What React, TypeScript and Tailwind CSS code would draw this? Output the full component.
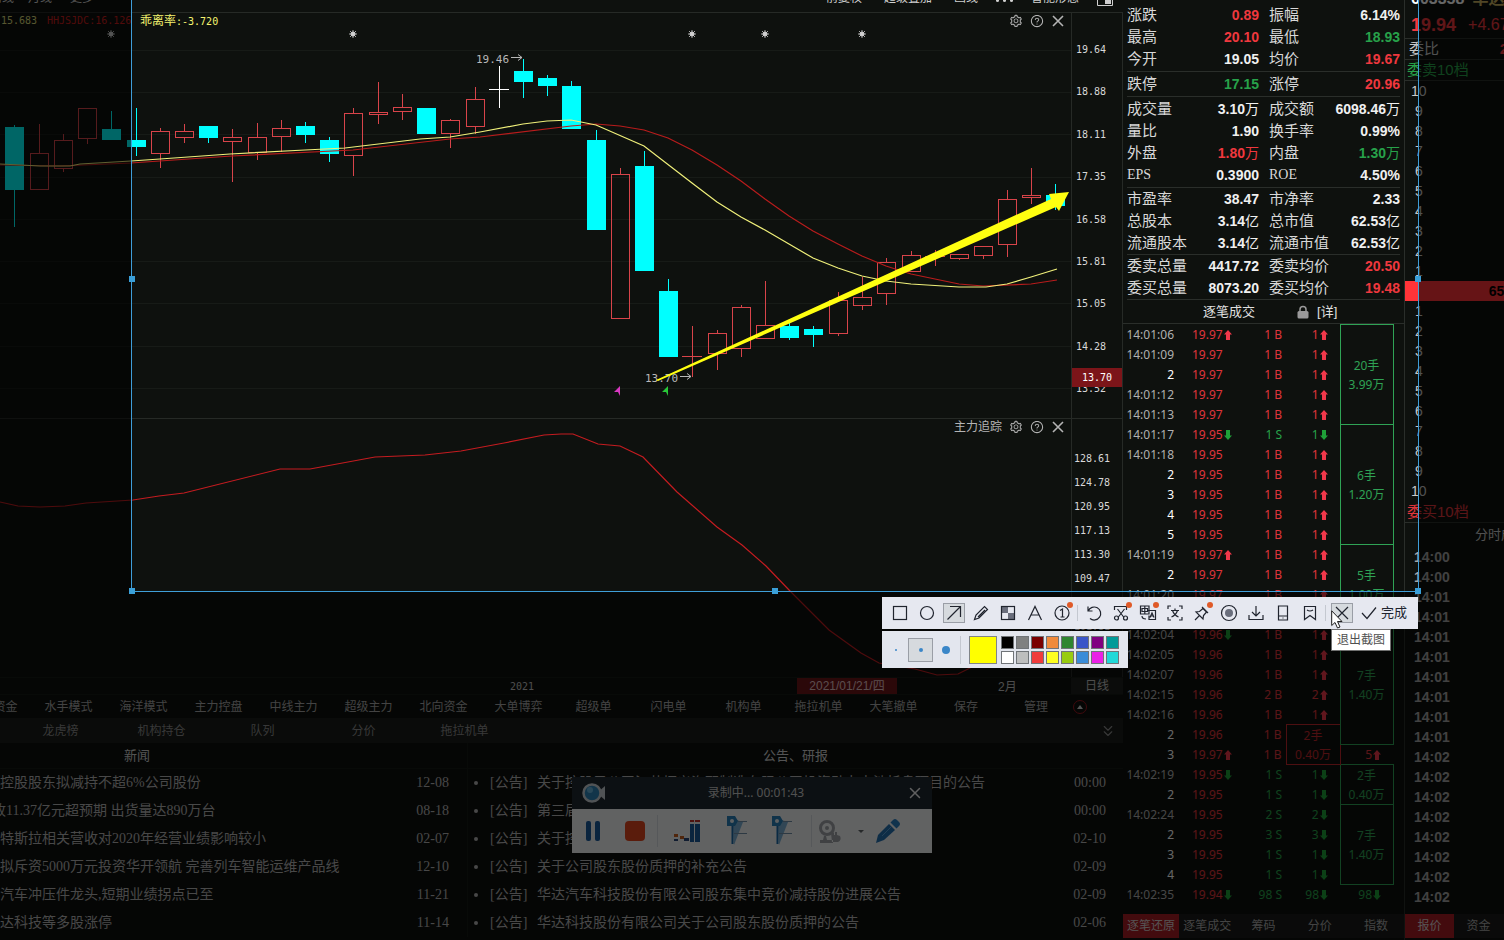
import type { ReactNode } from 'react'
import { AiOutlineQuestionCircle, AiOutlineSetting } from 'react-icons/ai'
import { ChevronsDown, X } from 'lucide-react'

type Candle = { x: number; kind: 'up' | 'down' | 'flat'; top: number; bottom: number; high: number; low: number }

const c = (x: number, kind: Candle['kind'], top: number, bottom: number, high = top, low = bottom): Candle => ({
  x, kind, top, bottom, high, low,
})

const CANDLES: Candle[] = [
  c(14, 'down', 127, 190, 125, 227),
  c(39, 'up', 153, 190, 124),
  c(63, 'up', 140, 169, 134, 172),
  c(87, 'up', 108, 139, 108, 144),
  c(111, 'down', 129, 140, 111),
  c(136, 'down', 140, 147, 108, 156),
  c(160, 'up', 131, 154, 128, 168),
  c(184, 'up', 131, 138, 124, 143),
  c(208, 'down', 126, 138, 126, 143),
  c(232, 'up', 137, 142, 129, 182),
  c(257, 'up', 137, 153, 123, 160),
  c(281, 'up', 128, 137, 120, 152),
  c(305, 'down', 126, 135, 122, 143),
  c(329, 'down', 140, 154, 137, 162),
  c(353, 'up', 113, 156, 108, 176),
  c(378, 'up', 112, 115, 82, 124),
  c(402, 'up', 107, 112, 94, 120),
  c(426, 'down', 108, 134),
  c(450, 'up', 120, 134, 119, 148),
  c(475, 'up', 99, 127, 87, 134),
  c(499, 'flat', 89, 89, 66, 108),
  c(523, 'down', 71, 82, 59, 98),
  c(547, 'down', 78, 86, 75, 96),
  c(571, 'down', 86, 129, 81),
  c(596, 'down', 140, 230, 130),
  c(620, 'up', 174, 319, 168),
  c(644, 'down', 166, 271, 151),
  c(668, 'down', 291, 357, 279),
  c(692, 'up', 356, 356, 326, 377),
  c(717, 'up', 333, 354, 330, 370),
  c(741, 'up', 307, 349, 305, 357),
  c(765, 'up', 325, 339, 281),
  c(789, 'down', 326, 338, 320, 340),
  c(813, 'down', 329, 335, 326, 347),
  c(838, 'up', 300, 334, 292, 336),
  c(862, 'up', 297, 306, 277, 310),
  c(886, 'up', 262, 294, 258, 305),
  c(911, 'up', 255, 272, 251),
  c(935, 'up', 256, 256, 250, 266),
  c(959, 'up', 254, 259, 254, 260),
  c(983, 'up', 246, 256, 246, 259),
  c(1007, 'up', 199, 245, 190, 257),
  c(1031, 'up', 195, 198, 168, 204),
  c(1055, 'down', 195, 206, 184, 210),
]

const MA_FAST =
  '0,164 40,166 70,166 80,164 131,161 160,159 230,154 305,150 345,148 420,139 450,137 480,132 523,124 547,121 571,120 596,125 644,146 692,183 717,202 741,217 765,230 789,244 813,258 838,268 862,276 886,281 911,284 959,287 986,287 1007,284 1031,277 1057,269'
const MA_SLOW =
  '0,165 60,166 131,163 232,156 353,150 450,139 480,137 571,126 596,124 620,126 644,130 668,138 692,150 717,165 741,181 765,199 789,216 813,231 838,244 862,256 886,266 911,274 935,279 959,284 983,286 1031,284 1057,280'
const TRACE =
  '0,502 18,506 40,507 65,506 86,503 133,500 159,496 184,493 280,469 310,469 375,457 425,455 461,451 504,443 544,435 561,434 573,434 598,444 620,446 643,457 677,492 717,527 742,545 766,566 790,591 829,630 861,653 879,663 915,669 937,675 958,674 980,663'

const PRICE_AXIS = ['19.64', '18.88', '18.11', '17.35', '16.58', '15.81', '15.05', '14.28', '13.52']
const TRACE_AXIS = ['128.61', '124.78', '120.95', '117.13', '113.30', '109.47', '105.64', '101.81']
const GRID_Y = [50, 92, 134, 177, 219, 261, 303, 346, 388]

const SCHEMES = [
  '游击资金', '水手模式', '海洋模式', '主力控盘', '中线主力', '超级主力', '北向资金',
  '大单博弈', '超级单', '闪电单', '机构单', '拖拉机单', '大笔撤单',
]
const SUB_TABS = ['龙虎榜', '机构持仓', '队列', '分价', '拖拉机单']

const NEWS = [
  { title: '控股股东拟减持不超6%公司股份', date: '12-08' },
  { title: '收11.37亿元超预期 出货量达890万台', date: '08-18', clipped: true },
  { title: '特斯拉相关营收对2020年经营业绩影响较小', date: '02-07' },
  { title: '拟斥资5000万元投资华开领航 完善列车智能运维产品线', date: '12-10' },
  { title: '汽车冲压件龙头,短期业绩拐点已至', date: '11-21' },
  { title: '达科技等多股涨停', date: '11-14' },
]

const NOTICES = [
  { title: '关于控股子公司江苏恒义汽配制造有限公司投资动力电池托盘项目的公告', date: '00:00' },
  { title: '第三届董事会第十次会议决议公告', date: '00:00' },
  { title: '关于控股股东股份质押的公告', date: '02-10' },
  { title: '关于公司股东股份质押的补充公告', date: '02-09' },
  { title: '华达汽车科技股份有限公司股东集中竞价减持股份进展公告', date: '02-09' },
  { title: '华达科技股份有限公司关于公司股东股份质押的公告', date: '02-06' },
]

const RED = 'text-[#f0383e]'
const GREEN = 'text-[#27a24a]'
const WHITE = 'text-[#f0f0f0]'

type Stat = [label: string, value: string, color: string]

const STATS: { pad: string; rows: [Stat, Stat][] }[] = [
  {
    pad: 'pt-1 pb-px',
    rows: [
      [['涨跌', '0.89', RED], ['振幅', '6.14%', WHITE]],
      [['最高', '20.10', RED], ['最低', '18.93', GREEN]],
      [['今开', '19.05', WHITE], ['均价', '19.67', RED]],
    ],
  },
  { pad: 'py-px', rows: [[['跌停', '17.15', GREEN], ['涨停', '20.96', RED]]] },
  {
    pad: 'py-px',
    rows: [
      [['成交量', '3.10万', WHITE], ['成交额', '6098.46万', WHITE]],
      [['量比', '1.90', WHITE], ['换手率', '0.99%', WHITE]],
      [['外盘', '1.80万', RED], ['内盘', '1.30万', GREEN]],
      [['EPS', '0.3900', WHITE], ['ROE', '4.50%', WHITE]],
    ],
  },
  {
    pad: '',
    rows: [
      [['市盈率', '38.47', WHITE], ['市净率', '2.33', WHITE]],
      [['总股本', '3.14亿', WHITE], ['总市值', '62.53亿', WHITE]],
      [['流通股本', '3.14亿', WHITE], ['流通市值', '62.53亿', WHITE]],
    ],
  },
  {
    pad: '',
    rows: [
      [['委卖总量', '4417.72', WHITE], ['委卖均价', '20.50', RED]],
      [['委买总量', '8073.20', WHITE], ['委买均价', '19.48', RED]],
    ],
  },
]

type Dir = 'up' | 'down'
type Group = { span: number; hands: string; amount: string }
type Tick = {
  time: string
  price: string
  mark?: Dir
  lots: number
  side: 'B' | 'S'
  box?: Group // merged order in the last column
  redBox?: Group // merged order in the count column
  noCount?: boolean
  last?: { value: string; dir: Dir }
}

const TICKS: Tick[] = [
  { time: '14:01:06', price: '19.97', mark: 'up', lots: 1, side: 'B', box: { span: 5, hands: '20手', amount: '3.99万' } },
  { time: '14:01:09', price: '19.97', lots: 1, side: 'B' },
  { time: '2', price: '19.97', lots: 1, side: 'B' },
  { time: '14:01:12', price: '19.97', lots: 1, side: 'B' },
  { time: '14:01:13', price: '19.97', lots: 1, side: 'B' },
  { time: '14:01:17', price: '19.95', mark: 'down', lots: 1, side: 'S', box: { span: 6, hands: '6手', amount: '1.20万' } },
  { time: '14:01:18', price: '19.95', lots: 1, side: 'B' },
  { time: '2', price: '19.95', lots: 1, side: 'B' },
  { time: '3', price: '19.95', lots: 1, side: 'B' },
  { time: '4', price: '19.95', lots: 1, side: 'B' },
  { time: '5', price: '19.95', lots: 1, side: 'B' },
  { time: '14:01:19', price: '19.97', mark: 'up', lots: 1, side: 'B', box: { span: 4, hands: '5手', amount: '1.00万' } },
  { time: '2', price: '19.97', lots: 1, side: 'B' },
  { time: '14:01:20', price: '19.97', lots: 1, side: 'B' },
  { time: '14:01:22', price: '19.97', lots: 1, side: 'B' },
  { time: '14:02:04', price: '19.96', mark: 'down', lots: 1, side: 'B', box: { span: 6, hands: '7手', amount: '1.40万' } },
  { time: '14:02:05', price: '19.96', lots: 1, side: 'B' },
  { time: '14:02:07', price: '19.96', lots: 1, side: 'B' },
  { time: '14:02:15', price: '19.96', lots: 2, side: 'B' },
  { time: '14:02:16', price: '19.96', lots: 1, side: 'B' },
  { time: '2', price: '19.96', lots: 1, side: 'B', redBox: { span: 2, hands: '2手', amount: '0.40万' } },
  { time: '3', price: '19.97', mark: 'up', lots: 1, side: 'B', noCount: true, last: { value: '5', dir: 'up' } },
  { time: '14:02:19', price: '19.95', mark: 'down', lots: 1, side: 'S', box: { span: 2, hands: '2手', amount: '0.40万' } },
  { time: '2', price: '19.95', lots: 1, side: 'S' },
  { time: '14:02:24', price: '19.95', lots: 2, side: 'S', box: { span: 4, hands: '7手', amount: '1.40万' } },
  { time: '2', price: '19.95', lots: 3, side: 'S' },
  { time: '3', price: '19.95', lots: 1, side: 'S' },
  { time: '4', price: '19.95', lots: 1, side: 'S' },
  { time: '14:02:35', price: '19.94', mark: 'down', lots: 98, side: 'S', last: { value: '98', dir: 'down' } },
]

const ASKS = ['10', '9', '8', '7', '6', '5', '4', '3', '2', '1']
const BIDS = [...ASKS].reverse()
const MINUTES = [...Array(2).fill('14:00'), ...Array(8).fill('14:01'), ...Array(8).fill('14:02')] as string[]

function DirArrow({ dir }: { dir: Dir }) {
  return (
    <svg viewBox="0 0 8 10" className={`ml-px inline-block h-2.5 w-2 align-[-1px] ${dir === 'up' ? 'text-[#f0384a]' : 'text-[#1fa038] rotate-180'}`}>
      <path d="M4 0L8 4.5H6V10H2V4.5H0Z" fill="currentColor" />
    </svg>
  )
}

function PaneTools({ title }: { title?: string }) {
  return (
    <div className="flex items-center gap-[7px] text-[#b4b4b4]">
      {title && <span className="text-xs">{title}</span>}
      <button aria-label="设置"><AiOutlineSetting size={14} /></button>
      <button aria-label="帮助"><AiOutlineQuestionCircle size={14} /></button>
      <button aria-label="关闭">
        <svg viewBox="0 0 14 14" className="h-3.5 w-3.5" stroke="currentColor" strokeWidth="1.6">
          <path d="M2 2L12 12M12 2L2 12" />
        </svg>
      </button>
    </div>
  )
}

function CandleShape({ candle }: { candle: Candle }) {
  const { x, kind, top, bottom, high, low } = candle
  const color = kind === 'up' ? '#d8444a' : kind === 'down' ? '#00ffff' : '#ffffff'
  const mid = x + 0.5
  if (top === bottom) {
    return (
      <g stroke={color}>
        <line x1={x - 10} x2={x + 10} y1={top + 0.5} y2={top + 0.5} />
        <line x1={mid} x2={mid} y1={high} y2={low} />
      </g>
    )
  }
  return (
    <g stroke={color}>
      {high < top && <line x1={mid} x2={mid} y1={high} y2={top} />}
      {low > bottom && <line x1={mid} x2={mid} y1={bottom} y2={low} />}
      <rect x={x - 9 + 0.5} y={top + 0.5} width={18} height={bottom - top - 1} fill={kind === 'down' ? color : 'none'} />
    </g>
  )
}

function Star({ x }: { x: number }) {
  return (
    <g stroke="#d0d0d0" fill="#d0d0d0">
      <circle cx={x} cy={34} r={2} />
      <path d={`M${x - 4} 34h8M${x} 30v8M${x - 3} 31l6 6M${x + 3} 31l-6 6`} strokeWidth="0.8" />
    </g>
  )
}

function PriceChart() {
  return (
    <svg className="block h-full w-full">
      {/* the pane starts 13px below the window edge */}
      <g transform="translate(0 -13)">
        {GRID_Y.map(y => <line key={y} x1={0} x2="100%" y1={y + 0.5} y2={y + 0.5} stroke="#171b17" />)}
        {[111, 353, 692, 765, 862].map(x => <Star key={x} x={x} />)}
        {CANDLES.map(k => <CandleShape key={k.x} candle={k} />)}
        <polyline points={MA_SLOW} fill="none" stroke="#b81c1c" strokeWidth="1.2" />
        <polyline points={MA_FAST} fill="none" stroke="#f0f07a" strokeWidth="1.2" />
        <g className="font-['DejaVu_Sans_Mono',monospace] text-[11px]" fill="#b8b8b8">
          <text x="476" y="63">19.46</text>
          <text x="645" y="382">13.70</text>
        </g>
        <path d="M511 57.5h11M518 54.5l4 3l-4 3M680 376.5h11M687 373.5l4 3l-4 3" fill="none" stroke="#b8b8b8" />
        <path d="M614 392L620 386V396L618 392Z" fill="#d838c0" />
        <path d="M662 392L668 386V396L666 392Z" fill="#28c838" />
        <path d="M656 380L1051 199L1049 194L1069 192L1059 211L1056 207L658 381Z" fill="#ffff10" />
      </g>
    </svg>
  )
}

function ChartArea() {
  return (
    <div className="flex border-t border-[#262a26]">
      <div className="min-w-0 flex-1">
        <section className="relative h-[405px]">
          <PriceChart />
          <header className="absolute inset-x-0 top-0 flex h-4 items-center justify-between pr-1.5 pl-px">
            <div className="flex items-center text-xs whitespace-nowrap">
              <span className="w-[46px] font-['DejaVu_Sans_Mono',monospace] text-[10px] text-[#d8d878]">15.683</span>
              <span className="w-[93px] font-['DejaVu_Sans_Mono',monospace] text-[10px] text-[#c81c1c]">HHJSJDC:16.126</span>
              <span className="text-[#f4f470]">
                乖离率<span className="font-['DejaVu_Sans_Mono',monospace] text-[10px]">:-3.720</span>
              </span>
            </div>
            <PaneTools />
          </header>
        </section>
        <section className="relative h-[259px] border-t border-[#262a26]">
          <svg className="block h-full w-full">
            <g transform="translate(0 -419)">
              <polyline points={TRACE} fill="none" stroke="#c41c20" strokeWidth="1.2" />
            </g>
          </svg>
          <header className="absolute inset-x-0 top-0 flex h-4 items-center justify-end pr-1.5">
            <PaneTools title="主力追踪" />
          </header>
        </section>
      </div>

      <div className="w-[52px] border-x border-[#262a26] font-['DejaVu_Sans_Mono',monospace] text-[10px] text-[#d8d8d8]">
        <div className="relative flex h-[405px] flex-col justify-between pt-[30px] pb-[22px] pl-1">
          {PRICE_AXIS.map(p => <span key={p} className="leading-[14px]">{p}</span>)}
          <span className="absolute inset-x-0 bottom-[31px] bg-[#7c1519] pl-2.5 leading-[19px] text-white">13.70</span>
        </div>
        <div className="flex h-[259px] flex-col border-t border-[#262a26] pt-7 pl-0.5">
          {TRACE_AXIS.map(p => <span key={p} className="leading-6">{p}</span>)}
        </div>
      </div>
    </div>
  )
}

function NewsPanels() {
  return (
    <div className="flex text-sm text-[#b4b4b4]">
      <section className="w-[468px] shrink-0 border-r border-[#161916]">
        <h2 className="border-b border-[#161916] pr-[193px] text-center text-[13px] leading-[25px] text-[#d0d0d0]">新闻</h2>
        <ul className="font-['Liberation_Serif','Noto_Sans_CJK_SC',serif]">
          {NEWS.map(n => (
            <li key={n.title} className="flex h-7 items-center justify-between overflow-hidden pr-[18px] whitespace-nowrap">
              <a href="#" className={n.clipped ? '-ml-2' : ''}>{n.title}</a>
              <time>{n.date}</time>
            </li>
          ))}
        </ul>
      </section>
      <section className="min-w-0 flex-1">
        <h2 className="border-b border-[#161916] text-center text-[13px] leading-[25px] text-[#d0d0d0]">公告、研报</h2>
        <ul className="font-['Liberation_Serif','Noto_Sans_CJK_SC',serif]">
          {NOTICES.map(n => (
            <li key={n.title} className="flex h-7 items-center pr-[17px] pl-1.5 whitespace-nowrap">
              <span className="mr-3 h-1 w-1 rounded-full bg-[#b4b4b4]" />
              <span className="w-[47px]">[公告]</span>
              <a href="#" className="flex-1">{n.title}</a>
              <time>{n.date}</time>
            </li>
          ))}
        </ul>
      </section>
    </div>
  )
}

function LeftColumn() {
  return (
    <main className="min-w-0 flex-1 overflow-hidden">
      <div className="flex h-3 items-end pb-1.5 text-xs leading-4 whitespace-nowrap text-[#d0d0d0]">
        <span className="-ml-2.5 w-[38px]">周线</span>
        <span className="w-[42px]">月线</span>
        <span>更多</span>
        <div className="ml-auto flex items-end gap-[18px] pr-2.5">
          <span className="mr-1">前复权</span>
          <span className="mr-1">超级叠加</span>
          <span>画线</span>
          <span className="flex gap-1 pb-1">
            <i className="h-[3px] w-[3px] rounded-full bg-current" />
            <i className="h-[3px] w-[3px] rounded-full bg-current" />
            <i className="h-[3px] w-[3px] rounded-full bg-current" />
          </span>
          <span>智能形态</span>
          <svg viewBox="0 0 16 16" className="h-4 w-4">
            <path d="M.5.5h15v15H.5Z" fill="none" stroke="#d0d0d0" />
            <path d="M8 9h6v5H8Z" fill="#d0d0d0" />
          </svg>
        </div>
      </div>

      <ChartArea />

      {/* Date axis */}
      <div className="flex h-[18px] items-center border-y border-[#161916] text-xs text-[#c0c0c0]">
        <span className="w-[797px] pt-0.5 pl-[510px] font-['DejaVu_Sans_Mono',monospace] text-[10px]">2021</span>
        <span className="w-[100px] bg-[#6c1418] text-center leading-4 text-[#e0c0c0]">2021/01/21/四</span>
        <span className="pt-0.5 pl-[101px]">2月</span>
        <span className="ml-auto w-[52px] bg-[#1c1e1c] text-center leading-4">日线</span>
      </div>

      <nav className="flex h-[23px] items-center overflow-hidden text-xs whitespace-nowrap text-[#a8a8a8]">
        {SCHEMES.map((s, i) => (
          <button key={s} className={`w-[75px] shrink-0 ${i === 0 ? '-ml-11' : ''}`}>{s}</button>
        ))}
        <button className="w-[70px] shrink-0">保存</button>
        <button className="w-[70px] shrink-0">管理</button>
        <button aria-label="展开" className="ml-0.5 flex h-3.5 w-3.5 items-center justify-center rounded-full border border-[#a01820]">
          <svg viewBox="0 0 6 4" className="h-1 w-1.5"><path d="M3 0L6 4H0Z" fill="#d0d0d0" /></svg>
        </button>
      </nav>
      <nav className="flex h-[25px] items-center bg-[#191c19] pl-2.5 text-xs text-[#8c8c8c]">
        {SUB_TABS.map(s => <button key={s} className="w-[101px]">{s}</button>)}
        <button aria-label="收起" className="mr-1.5 ml-auto"><ChevronsDown size={18} strokeWidth={1.5} /></button>
      </nav>

      <NewsPanels />
    </main>
  )
}

function StatCell({ stat, className }: { stat: Stat; className: string }) {
  const [label, value, color] = stat
  const latin = label === 'EPS' || label === 'ROE'
  return (
    <div className={`flex items-center justify-between ${className}`}>
      <dt className={latin ? "font-['Liberation_Serif',serif] text-sm text-[#d8d8d8]" : 'text-[15px] text-[#d8d8d8]'}>{label}</dt>
      <dd className={`text-sm font-bold ${color}`}>
        {value.replace(/[万亿]/, '')}
        <span className="font-normal">{value.match(/[万亿]/)?.[0]}</span>
      </dd>
    </div>
  )
}

function GroupCell({ group, color }: { group: Group; color: 'green' | 'red' }) {
  return (
    <td
      rowSpan={group.span}
      className={`border p-0 text-center align-middle ${
        color === 'green' ? 'border-[#2fa355] text-[#2fa355]' : 'border-[#c0262c] text-[#c0262c]'
      }`}
    >
      {group.hands}<br />{group.amount}
    </td>
  )
}

function TickTable() {
  return (
    <table className="w-[270px] table-fixed border-collapse font-['Noto_Sans','Noto_Sans_CJK_SC',sans-serif] text-xs leading-[19px] whitespace-nowrap">
      <colgroup>
        <col className="w-[51px]" /><col className="w-[71px]" /><col className="w-[41px]" /><col className="w-[54px]" /><col className="w-[53px]" />
      </colgroup>
      <tbody>
        {TICKS.map((t, i) => {
          const dir: Dir = t.side === 'B' ? 'up' : 'down'
          const tone = t.side === 'B' ? 'text-[#e0353c]' : 'text-[#27a24a]'
          return (
            <tr key={i} className="h-5">
              <td className={`p-0 text-right ${t.time.length > 1 ? 'text-[#b0b0b0]' : 'text-white'}`}>{t.time}</td>
              <td className="p-0 pl-[18px] text-[#e0353c]">{t.price}{t.mark && <DirArrow dir={t.mark} />}</td>
              <td className={`p-0 pr-1 text-right ${tone}`}>{t.lots} {t.side}</td>
              {t.redBox && <GroupCell group={t.redBox} color="red" />}
              {!t.redBox && !t.noCount && (
                <td className={`p-0 pr-3 text-right ${tone}`}>{t.lots}<DirArrow dir={dir} /></td>
              )}
              {t.box && <GroupCell group={t.box} color="green" />}
              {t.last && (
                <td className={`p-0 pr-3 text-right ${t.last.dir === 'up' ? 'text-[#e0353c]' : 'text-[#27a24a]'}`}>
                  {t.last.value}<DirArrow dir={t.last.dir} />
                </td>
              )}
            </tr>
          )
        })}
      </tbody>
    </table>
  )
}

function QuotePanel() {
  return (
    <aside className="w-[281px] shrink-0">
      <dl className="px-1">
        {STATS.map((g, i) => (
          <div key={i} className={`border-b border-[#2a2e2a] ${g.pad}`}>
            {g.rows.map(([left, right]) => (
              <div key={left[0]} className="flex h-[22px]">
                <StatCell stat={left} className="w-[132px]" />
                <StatCell stat={right} className="ml-2.5 flex-1" />
              </div>
            ))}
          </div>
        ))}
      </dl>
      <div className="flex h-6 items-center border-b border-[#2a2e2a] pl-20 text-[13px] text-[#e0e0e0]">
        <h2>逐笔成交</h2>
        <svg viewBox="0 0 12 14" className="ml-[42px] h-3.5 w-3">
          <path d="M3 7V4.500a3 3 0 0 1 6 0V7" fill="none" stroke="#9a9a9a" strokeWidth="1.5" />
          <rect x="0.500" y="6" width="11" height="7.500" rx="1.500" fill="#9a9a9a" />
        </svg>
        <button className="ml-2">[详]</button>
      </div>
      <TickTable />
      <nav className="mt-[9px] flex h-6 bg-[#191b19] text-xs text-[#a8a8a8]">
        {['逐笔还原', '逐笔成交', '筹码', '分价', '指数'].map((t, i) => (
          <button key={t} className={i === 0 ? 'flex-1 bg-[#a81c24] text-[#d8d0d0]' : 'flex-1'}>{t}</button>
        ))}
      </nav>
    </aside>
  )
}

function DepthPanel() {
  return (
    <aside className="w-[100px] shrink-0 overflow-hidden border-l border-[#2a2e2a] whitespace-nowrap text-[#c8c8c8]">
      <div className="flex h-[11px] items-end gap-2 pb-1 pl-1.5 text-base leading-4 font-bold">
        <span className="text-white">603358</span>
        <span className="text-[#c8b060]">华达科技</span>
      </div>
      <div className="flex h-7 items-center gap-3 border-b border-[#2a2e2a] pl-1.5 text-[#f0383e]">
        <span className="text-lg font-bold">19.94</span>
        <span className="text-base">+4.67%</span>
      </div>
      <div className="flex h-[21px] items-center justify-between border-b border-[#2a2e2a] pl-1 text-[15px]">
        <span>委比</span>
        <span className="-mr-1 font-bold text-[#f0383e]">2</span>
      </div>
      <div className="border-b border-[#2a2e2a] pl-0.5 text-[15px] leading-[20px] text-[#27a24a]">委卖10档</div>
      <ol className="text-sm leading-5">
        {ASKS.map(n => <li key={n} className={n === '10' ? 'pl-1.5' : 'pl-2.5'}>{n}</li>)}
        <li className="bg-[#ff3438] text-right">
          <b className="-mr-2 text-black">652</b>
        </li>
        {BIDS.map(n => <li key={n} className={n === '10' ? 'pl-1.5' : 'pl-2.5'}>{n}</li>)}
      </ol>
      <div className="border-b border-[#2a2e2a] pl-0.5 text-[15px] leading-[21px] text-[#e0353c]">委买10档</div>
      <h2 className="pl-[70px] text-[13px] leading-6">分时成交</h2>
      <ol className="pl-[9px] text-sm leading-5 font-bold text-[#a4a4a4]">
        {MINUTES.map((m, i) => <li key={i}>{m}</li>)}
      </ol>
      <nav className="mt-[7px] flex h-6 bg-[#191b19] text-xs text-[#a8a8a8]">
        <button className="w-[49px] bg-[#a81c24] text-[#d8d0d0]">报价</button>
        <button className="w-[49px]">资金</button>
      </nav>
    </aside>
  )
}

function RecorderWindow() {
  return (
    <div className="absolute top-[777px] left-[572px] w-[360px]">
      <div className="flex h-8 items-center justify-between bg-[#202930] px-2 text-[#c8c8c8]">
        <svg viewBox="0 0 24 20" className="ml-0.5 h-5 w-6">
          <path d="M15 10L23 3V17Z" fill="#c8d0d4" />
          <circle cx="10" cy="10" r="8.5" fill="#2f86b8" stroke="#c8d0d4" strokeWidth="2.5" />
          <circle cx="8" cy="7" r="3" fill="#68b4dc" />
        </svg>
        <span className="font-['Noto_Sans','Noto_Sans_CJK_SC',sans-serif] text-xs">录制中... 00:01:43</span>
        <button aria-label="关闭" className="text-[#f0f0f0]"><X size={18} /></button>
      </div>
      <div className="flex h-11 items-center bg-[#f2f4f6]">
        <button aria-label="暂停" className="ml-3.5 flex gap-1">
          <span className="h-5 w-[5px] rounded-xs bg-[#1a5a9c]" />
          <span className="h-5 w-[5px] rounded-xs bg-[#1a5a9c]" />
        </button>
        <button aria-label="停止" className="ml-[25px] h-5 w-5 rounded-sm bg-[#e04820]" />
        <span className="ml-3 h-8 w-px bg-[#d8dce0]" />
        <svg viewBox="0 0 28 24" className="mr-[3px] ml-4 h-6 w-7">
          <path d="M0 15h4v3H0ZM6 17h4v3H6Z" fill="#c86020" />
          <path d="M0 20h4v2H0ZM10 19h5v3h-5Z" fill="#284878" />
          <path d="M16 5h4v18h-4ZM21 5h5v18h-5Z" fill="#1a5a9c" />
          <path d="M16 1h4v2h-4ZM21 1h5v2h-5Z" fill="#c03028" />
        </svg>
        {[0, 1].map(i => (
          <svg key={i} viewBox="0 0 24 30" className="ml-[21px] h-[30px] w-6">
            <path d="M7 3L17 6L8 29Z" fill="#7ab0d4" />
            <path d="M1 0h8l3 5l-3 5H1Z" fill="#2880b8" />
            <circle cx="6" cy="5" r="2" fill="#e8f0f4" />
            <path d="M6.500 10V28" stroke="#1a6aa8" strokeWidth="2" />
            <path d="M12 5.500h9M8 17.500h13" stroke="#7090a8" />
          </svg>
        ))}
        <span className="ml-4 h-8 w-px bg-[#d8dce0]" />
        <svg viewBox="0 0 24 24" className="ml-1.5 h-6 w-6 text-[#a0a4a8]">
          <circle cx="9" cy="9" r="6.500" fill="none" stroke="currentColor" strokeWidth="3" />
          <circle cx="9" cy="9" r="2" fill="currentColor" />
          <path d="M2 24h13v-3H9l-1-4H6l-1 4H2ZM13 14q1-3 3 0v2h1v-3h2v3l3 1q2 4-2 6h-6Z" fill="currentColor" />
        </svg>
        <svg viewBox="0 0 6 3" className="ml-4 h-[3px] w-1.5"><path d="M0 0h6L3 3Z" fill="#606468" /></svg>
        <button aria-label="画笔" className="ml-[11px]">
          <svg viewBox="0 0 26 26" className="h-[26px] w-[26px]">
            <path d="M1 25L3 17L14 6L20 12L9 22Z" fill="#2470b0" />
            <path d="M15.500 4.500L18 2Q20 0 22 2L24 4Q26 6 24 8L21.500 10.500Z" fill="#2880c0" />
            <path d="M7 18L16 9" stroke="#5aa0d8" />
          </svg>
        </button>
      </div>
    </div>
  )
}

// Everything outside the selected area is dimmed by the frame's own shadow
function SelectionFrame() {
  const handle = 'absolute h-1.5 w-1.5 bg-[#3a9fd8]'
  return (
    <div className="pointer-events-none absolute -top-[35px] right-[85px] left-[131px] h-[627px] border border-[#3f9ed8] shadow-[0_0_0_2000px_rgba(0,0,0,0.6)]">
      <span className={`${handle} top-1/2 -left-[3px] -mt-[3px]`} />
      <span className={`${handle} top-1/2 -right-[3px] -mt-[3px]`} />
      <span className={`${handle} -bottom-[3px] -left-[3px]`} />
      <span className={`${handle} -bottom-[3px] left-1/2 -ml-[3px]`} />
      <span className={`${handle} -right-[3px] -bottom-[3px]`} />
    </div>
  )
}

type Tool = { label: string; icon: ReactNode; dot?: boolean; active?: boolean }

const DRAW_TOOLS: Tool[] = [
  { label: '矩形', icon: <rect x="2.500" y="2.500" width="13" height="13" /> },
  { label: '椭圆', icon: <circle cx="9" cy="9" r="6.500" /> },
  { label: '箭头', active: true, icon: <path d="M2.500 15.500L15.500 2.500M5 2.500h10.500V13" /> },
  { label: '画笔', icon: <path d="M2.500 15.500L4 11L12.500 2.500L15.500 5.500L7 14ZM6 13L13 6" /> },
  {
    label: '马赛克',
    icon: (
      <>
        <path d="M2.500 2.500H9V9H2.500ZM9 9h6.500v6.500H9Z" fill="#6a6e7c" stroke="none" />
        <rect x="2.500" y="2.500" width="13" height="13" />
      </>
    ),
  },
  { label: '文字', icon: <path d="M2.500 16L9 2.500L15.500 16M5 11h8" /> },
  { label: '序号', dot: true, icon: <><circle cx="9" cy="9" r="7" /><path d="M7 6.500L9.500 5v8M7.500 13h4" /></> },
]

const ACTION_TOOLS: Tool[] = [
  { label: '撤销', icon: <path d="M3 2.500V7h4.500M3.200 7A6.500 6.500 0 1 1 5 14.500" /> },
  {
    label: '长截图', dot: true,
    icon: <><path d="M2.500 6V2.500h12V6M5.500 5L12 13.500M12.500 5L6 13.500" /><circle cx="4.500" cy="14" r="2" /><circle cx="13.500" cy="14" r="2" /></>,
  },
  {
    label: '翻译', dot: true,
    icon: <><path d="M1.500 2h8.500v8H1.500ZM3 4.500h5.500v3H3ZM5.800 2.500v7M8 6.500h8.500v9H10v-4M11 13.500l2-4.500l2 4.500M11.500 12h3M3 12q0 3 4 3" /></>,
  },
  {
    label: '识别文字',
    icon: <path d="M2 5V2h3M13 2h3v3M16 13v3h-3M5 16H2v-3M5 6.500h8M9 4.500v2M6.500 6.500Q8 11 12.500 13M11.500 6.500Q10 11 5.500 13" />,
  },
  { label: '钉住', dot: true, icon: <path d="M9 3L15 9M10 4.500L6.500 7.500L3 8L10 15L10.500 11.500L13.500 8M6.500 11.500L2 16M10 4.500l3.500 3.500" /> },
  { label: '录屏', icon: <><circle cx="9" cy="9" r="7.500" /><circle cx="9" cy="9" r="4" fill="#6a6e7c" stroke="none" /></> },
  { label: '保存', icon: <path d="M9 2v9.500M5 8l4 4l4-4M2 11v4.500h14V11" /> },
  { label: '发送到手机', icon: <path d="M4.500 2h9v14h-9ZM4.500 12h9M8.500 14h1" /> },
  { label: '收藏', icon: <path d="M3.500 2.500h11v13L9 11.500L3.500 15.500ZM6 6q3 2 6 0" /> },
]

const SWATCHES = [
  'bg-[#000000]', 'bg-[#7f8080]', 'bg-[#7a0000]', 'bg-[#f08a3c]', 'bg-[#2f8530]', 'bg-[#3a55c8]', 'bg-[#800080]', 'bg-[#009a98]',
  'bg-[#ffffff]', 'bg-[#bdbebe]', 'bg-[#f03c3c]', 'bg-[#ffff20]', 'bg-[#98cc10]', 'bg-[#3a8cd8]', 'bg-[#ea20e6]', 'bg-[#20d8d8]',
]

function ToolButton({ tool }: { tool: Tool }) {
  return (
    <button aria-label={tool.label} className="relative flex w-[27px] items-center justify-center">
      <span className={`flex h-5 w-[22px] items-center justify-center border ${tool.active ? 'border-[#9a9ea6] bg-[#d6dade]' : 'border-transparent'}`}>
        <svg viewBox="0 0 18 18" className="h-[18px] w-[18px] shrink-0" fill="none" stroke="#20242e" strokeWidth="1.2">
          {tool.icon}
        </svg>
      </span>
      {tool.dot && <span className="absolute -top-px right-0.5 h-1.5 w-1.5 rounded-full bg-[#e05a28]" />}
    </button>
  )
}

function CaptureToolbar() {
  return (
    <div className="absolute top-[597px] right-[86px] w-[536px]">
      <div className="flex h-8 items-center bg-[#e6e8f0] pl-1">
        {DRAW_TOOLS.map(t => <ToolButton key={t.label} tool={t} />)}
        <span className="mx-0.5 h-4 w-px bg-[#c4c8d0]" />
        {ACTION_TOOLS.map(t => <ToolButton key={t.label} tool={t} />)}
        <span className="mx-0.5 h-4 w-px bg-[#c4c8d0]" />
        <ToolButton tool={{ label: '退出截图', active: true, icon: <path d="M3 3L15 15M15 3L3 15" /> }} />
        <button className="ml-1.5 flex items-center gap-1 text-[13px] text-[#20242e]">
          <svg viewBox="0 0 16 14" className="h-3.5 w-4" fill="none" stroke="currentColor" strokeWidth="1.2">
            <path d="M1 7L6 12.500L15 1.500" />
          </svg>
          完成
        </button>
      </div>

      <div className="mt-0.5 flex h-[37px] w-[246px] items-center bg-[#e3e6ee] pl-px">
        <button aria-label="细" className="flex h-6 w-[25px] items-center justify-center">
          <span className="h-0.5 w-0.5 rounded-full bg-[#3a86c8]" />
        </button>
        <button aria-label="中" className="flex h-6 w-[25px] items-center justify-center border border-[#9a9ea6] bg-[#d6dade]">
          <span className="h-1 w-1 rounded-full bg-[#3a86c8]" />
        </button>
        <button aria-label="粗" className="flex h-6 w-[25px] items-center justify-center">
          <span className="h-2 w-2 rounded-full bg-[#3a86c8]" />
        </button>
        <span className="ml-0.5 h-7 w-px bg-[#c4c8d0]" />
        <span className="ml-2 h-7 w-7 border border-[#808488] bg-[#ffff00]" />
        <div className="ml-1 grid grid-cols-8 gap-0.5">
          {SWATCHES.map(s => <button key={s} aria-label={s.slice(4, -1)} className={`h-[13px] w-[13px] border border-[#707478] ${s}`} />)}
        </div>
      </div>

      <div role="tooltip" className="absolute top-8 right-[27px] border border-[#707070] bg-white px-[5px] text-xs leading-5 text-[#505050]">
        退出截图
      </div>
      <svg viewBox="0 0 12 19" className="absolute top-[13px] right-[75px] h-[19px] w-3">
        <path d="M.7.8V15.500L4 12.500L6.500 18L9 17L6.500 11.500H11Z" fill="#fff" stroke="#202020" />
      </svg>
    </div>
  )
}

export default function App() {
  return (
    <div className="relative flex min-h-screen overflow-hidden bg-[#0e110e] font-['Liberation_Sans','Noto_Sans_CJK_SC',sans-serif]">
      <LeftColumn />
      <QuotePanel />
      <DepthPanel />
      <RecorderWindow />
      <SelectionFrame />
      <CaptureToolbar />
    </div>
  )
}
